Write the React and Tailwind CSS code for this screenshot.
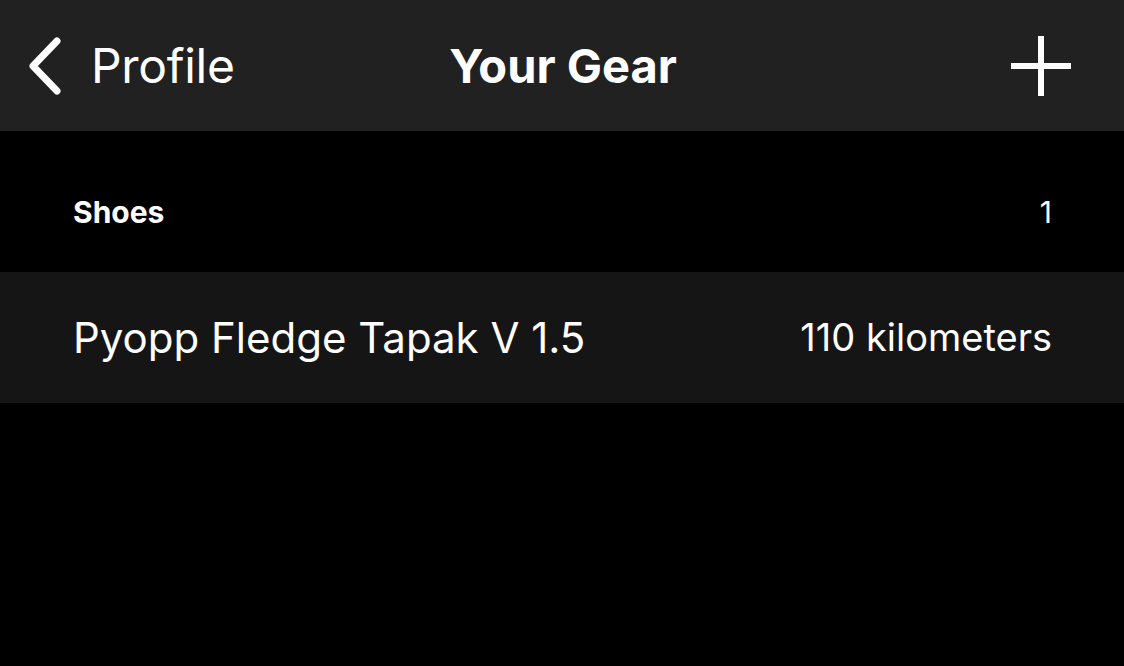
export default function App() {
  return (
    <div className="w-[1124px] h-[666px] bg-black text-white overflow-hidden" style={{ fontFamily: "Inter, 'Noto Sans', sans-serif" }}>
      <header className="h-[131px] bg-[#212121] flex items-center relative">
        <div className="flex items-center pl-[28px]">
          <svg width="34" height="58" viewBox="0 0 34 58" className="mr-[29px]">
            <path d="M29 4 L5 29 L29 54" fill="none" stroke="white" strokeWidth="7" strokeLinecap="round" strokeLinejoin="round" />
          </svg>
          <span className="text-[48px] leading-none tracking-[-0.3px]">Profile</span>
        </div>
        <div className="absolute left-0 right-0 flex justify-center pointer-events-none">
          <span className="text-[47px] font-bold leading-none ml-[2px]">Your Gear</span>
        </div>
        <div className="ml-auto pr-[53px]">
          <svg width="60" height="60" viewBox="0 0 60 60">
            <path d="M30 0 V60 M0 30 H60" stroke="white" strokeWidth="6" />
          </svg>
        </div>
      </header>
      <div className="h-[141px] flex items-center justify-between pl-[73px] pr-[72px] pt-[22px]">
        <span className="text-[30px] font-bold">Shoes</span>
        <span className="text-[30px]">1</span>
      </div>
      <div className="h-[131px] bg-[#151515] flex items-center justify-between pl-[73px] pr-[72px]">
        <span className="text-[42px] tracking-[0px]">Pyopp Fledge Tapak V 1.5</span>
        <span className="text-[38px] tracking-[0px]">110 kilometers</span>
      </div>
    </div>
  );
}
